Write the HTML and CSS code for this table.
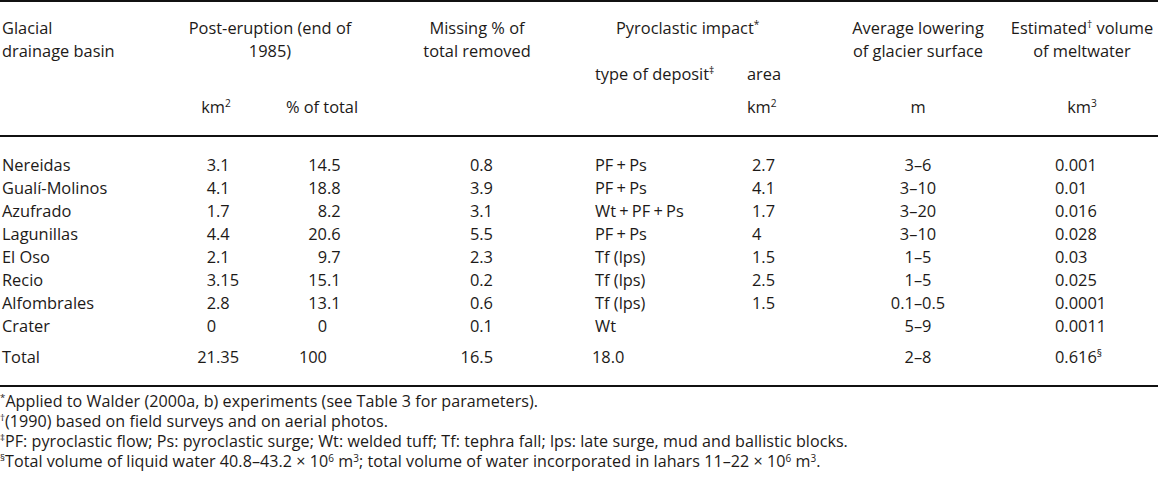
FILE: index.html
```html
<!DOCTYPE html>
<html lang="en">
<head>
<meta charset="utf-8">
<title>Glacial drainage basins</title>
<link rel="stylesheet" href="styles.css">
</head>
<body>
<div class="table">
  <div class="thead">
    <div class="row h1">
      <div class="c1">Glacial<br>drainage basin</div>
      <div class="span23">Post-eruption (end of<br>1985)</div>
      <div class="c4 center">Missing % of<br>total removed</div>
      <div class="span56">Pyroclastic impact<span class="sup">*</span></div>
      <div class="c7 center">Average lowering<br>of glacier surface</div>
      <div class="c8 center">Estimated<span class="sup">†</span> volume<br>of meltwater</div>
    </div>
    <div class="row h2">
      <div class="c5 hpad5">type of deposit<span class="sup">‡</span></div>
      <div class="c6 hpad6">area</div>
    </div>
    <div class="row h3">
      <div class="c2 center">km<span class="sup">2</span></div>
      <div class="c3 center">% of total</div>
      <div class="c6 hpad6">km<span class="sup">2</span></div>
      <div class="c7 center">m</div>
      <div class="c8 center">km<span class="sup">3</span></div>
    </div>
  </div>
  <div class="tbody">
    <div class="row"><div class="c1">Nereidas</div><div class="c2 num"><span class="i">3</span>.1</div><div class="c3 num"><span class="i">14</span>.5</div><div class="c4 right">0.8</div><div class="c5 dpad5 tight">PF + Ps</div><div class="c6 dpad6">2.7</div><div class="c7 center">3–6</div><div class="c8 dpad8">0.001</div></div>
    <div class="row"><div class="c1">Gualí-Molinos</div><div class="c2 num"><span class="i">4</span>.1</div><div class="c3 num"><span class="i">18</span>.8</div><div class="c4 right">3.9</div><div class="c5 dpad5 tight">PF + Ps</div><div class="c6 dpad6">4.1</div><div class="c7 center">3–10</div><div class="c8 dpad8">0.01</div></div>
    <div class="row"><div class="c1">Azufrado</div><div class="c2 num"><span class="i">1</span>.7</div><div class="c3 num"><span class="i">8</span>.2</div><div class="c4 right">3.1</div><div class="c5 dpad5 tight">Wt + PF + Ps</div><div class="c6 dpad6">1.7</div><div class="c7 center">3–20</div><div class="c8 dpad8">0.016</div></div>
    <div class="row"><div class="c1">Lagunillas</div><div class="c2 num"><span class="i">4</span>.4</div><div class="c3 num"><span class="i">20</span>.6</div><div class="c4 right">5.5</div><div class="c5 dpad5 tight">PF + Ps</div><div class="c6 dpad6">4</div><div class="c7 center">3–10</div><div class="c8 dpad8">0.028</div></div>
    <div class="row"><div class="c1">El Oso</div><div class="c2 num"><span class="i">2</span>.1</div><div class="c3 num"><span class="i">9</span>.7</div><div class="c4 right">2.3</div><div class="c5 dpad5">Tf (lps)</div><div class="c6 dpad6">1.5</div><div class="c7 center">1–5</div><div class="c8 dpad8">0.03</div></div>
    <div class="row"><div class="c1">Recio</div><div class="c2 num"><span class="i">3</span>.15</div><div class="c3 num"><span class="i">15</span>.1</div><div class="c4 right">0.2</div><div class="c5 dpad5">Tf (lps)</div><div class="c6 dpad6">2.5</div><div class="c7 center">1–5</div><div class="c8 dpad8">0.025</div></div>
    <div class="row"><div class="c1">Alfombrales</div><div class="c2 num"><span class="i">2</span>.8</div><div class="c3 num"><span class="i">13</span>.1</div><div class="c4 right">0.6</div><div class="c5 dpad5">Tf (lps)</div><div class="c6 dpad6">1.5</div><div class="c7 center">0.1–0.5</div><div class="c8 dpad8">0.0001</div></div>
    <div class="row"><div class="c1">Crater</div><div class="c2 num"><span class="i">0</span></div><div class="c3 num"><span class="i">0</span></div><div class="c4 right">0.1</div><div class="c5 dpad5">Wt</div><div class="c6 dpad6"></div><div class="c7 center">5–9</div><div class="c8 dpad8">0.0011</div></div>
    <div class="row total"><div class="c1">Total</div><div class="c2 num"><span class="i">21</span>.35</div><div class="c3 num"><span class="i">100</span></div><div class="c4 right">16.5</div><div class="c5 tpad5">18.0</div><div class="c6 dpad6"></div><div class="c7 center">2–8</div><div class="c8 dpad8">0.616<span class="sup">§</span></div></div>
  </div>
  <div class="notes">
    <p><span class="fsup">*</span>Applied to Walder (2000a, b) experiments (see Table 3 for parameters).</p>
    <p><span class="fsup">†</span>(1990) based on field surveys and on aerial photos.</p>
    <p><span class="fsup">‡</span>PF: pyroclastic flow; Ps: pyroclastic surge; Wt: welded tuff; Tf: tephra fall; lps: late surge, mud and ballistic blocks.</p>
    <p><span class="fsup">§</span>Total volume of liquid water 40.8–43.2 × 10<span class="sup">6</span> m<span class="sup">3</span>; total volume of water incorporated in lahars 11–22 × 10<span class="sup">6</span> m<span class="sup">3</span>.</p>
  </div>
</div>
</body>
</html>
```

FILE: styles.css
```css
html, body {
  margin: 0;
  padding: 0;
  background: #ffffff;
}
body {
  font-family: "Open Sans", "Lato", "DejaVu Sans", sans-serif;
  font-size: 16.4px;
  color: #1d1a18;
  width: 1158px;
}
.table {
  width: 1158px;
}
.thead {
  border-top: 2px solid #111;
  border-bottom: 2px solid #111;
  padding: 14px 0 17px;
}
.row {
  display: grid;
  grid-template-columns: 160px 112px 100px 210px 158px 90px 176px 152px;
  line-height: 23px;
  white-space: nowrap;
}
.c1 { grid-column: 1; padding-left: 2px; }
.c2 { grid-column: 2; }
.c3 { grid-column: 3; }
.c4 { grid-column: 4; }
.c5 { grid-column: 5; }
.c6 { grid-column: 6; }
.c7 { grid-column: 7; }
.c8 { grid-column: 8; }
.span23 { grid-column: 2 / span 2; text-align: center; padding-left: 8px; }
.span56 { grid-column: 5 / span 2; padding-left: 34px; }
.center { text-align: center; }
.right { text-align: right; padding-right: 89px; }
.h3 { margin-top: 10px; }
.hpad5 { padding-left: 13px; }
.hpad6 { padding-left: 7px; }
.dpad5 { padding-left: 13px; }
.tight { word-spacing: -1px; }
.tpad5 { padding-left: 10px; }
.dpad6 { padding-left: 12px; }
.dpad8 { padding-left: 49px; }
.num { padding-left: 16px; }
.c3.num { padding-left: 15px; }
.i {
  display: inline-block;
  width: 40px;
  text-align: right;
}
.tbody {
  padding: 16px 0 17px;
  border-bottom: 2px solid #111;
}
.total { margin-top: 8px; }
.sup {
  font-size: 0.62em;
  vertical-align: 0.55em;
  line-height: 0;
}
.notes {
  padding-top: 4px;
  font-size: 16.1px;
  letter-spacing: 0.05px;
  line-height: 20px;
}
.notes p {
  margin: 0;
  white-space: nowrap;
}
.fsup {
  font-size: 0.6em;
  vertical-align: 0.6em;
  line-height: 0;
}
```
